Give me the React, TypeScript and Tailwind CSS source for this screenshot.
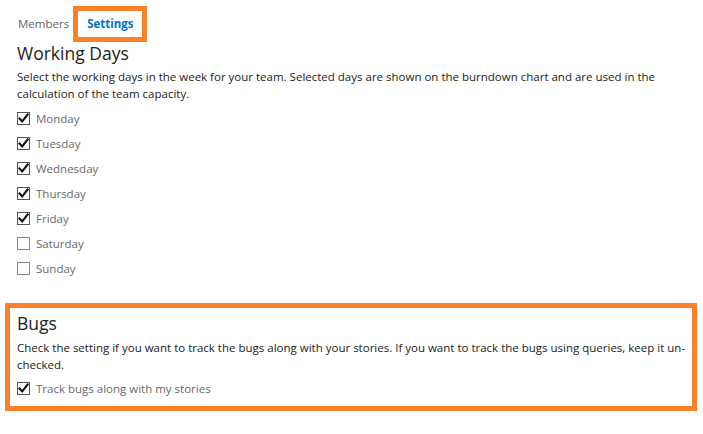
import React from "react";

const days: [string, boolean][] = [
  ["Monday", true],
  ["Tuesday", true],
  ["Wednesday", true],
  ["Thursday", true],
  ["Friday", true],
  ["Saturday", false],
  ["Sunday", false],
];

function Check({ checked }: { checked: boolean }) {
  return (
    <span className={`flex h-[13px] w-[13px] items-center justify-center border bg-white ${checked ? "border-[#555]" : "border-[#8a8a8a]"}`}>
      {checked && (
        <svg width="11" height="11" viewBox="0 0 11 11">
          <path d="M1.5 5.5 L4.2 8.4 L9.6 1.6" fill="none" stroke="#111" strokeWidth="2.1" strokeLinecap="square" />
        </svg>
      )}
    </span>
  );
}

function Row({ label, checked }: { label: string; checked: boolean }) {
  return (
    <div className="flex h-[25px] items-center">
      <Check checked={checked} />
      <span className="ml-[6px] text-[11.5px] text-[#6a6a6a]">{label}</span>
    </div>
  );
}

export default function App() {
  return (
    <div className="h-[434px] w-[703px] bg-white text-[#222]" style={{ fontFamily: '"Open Sans", "Noto Sans", sans-serif' }}>
      <div className="flex items-center pl-[18px] pt-[6px]">
        <span className="text-[11.5px] text-[#666]">Members</span>
        <div className="ml-[4px] flex h-[36px] items-center border-[5px] border-[#fd7f28] pl-[9px] pr-[8px]">
          <span className="text-[11.5px] font-bold text-[#0072c6]">Settings</span>
        </div>
      </div>
      <div className="pl-[17px] pr-[40px]">
        <h1 className="text-[17.5px] leading-[22px] font-normal">Working Days</h1>
        <p className="mt-[4px] text-[11.5px] leading-[17px]">
          Select the working days in the week for your team. Selected days are shown on the burndown chart and are used in the calculation of the team capacity.
        </p>
        <div className="mt-[4px] flex flex-col">
          {days.map(([d, c]) => (
            <Row key={d} label={d} checked={c} />
          ))}
        </div>
      </div>
      <div className="ml-[5px] mr-[6px] mt-[22px] border-[5px] border-[#fd7f28] pb-[5px] pl-[7px] pr-[2px] pt-[4px]">
        <h2 className="text-[17.5px] leading-[22px] font-normal">Bugs</h2>
        <p className="mt-[5px] text-[11.5px] leading-[17px]">
          Check the setting if you want to track the bugs along with your stories. If you want to track the bugs using queries, keep it un-checked.
        </p>
        <div className="mt-[3px]">
          <Row label="Track bugs along with my stories" checked={true} />
        </div>
      </div>
    </div>
  );
}
